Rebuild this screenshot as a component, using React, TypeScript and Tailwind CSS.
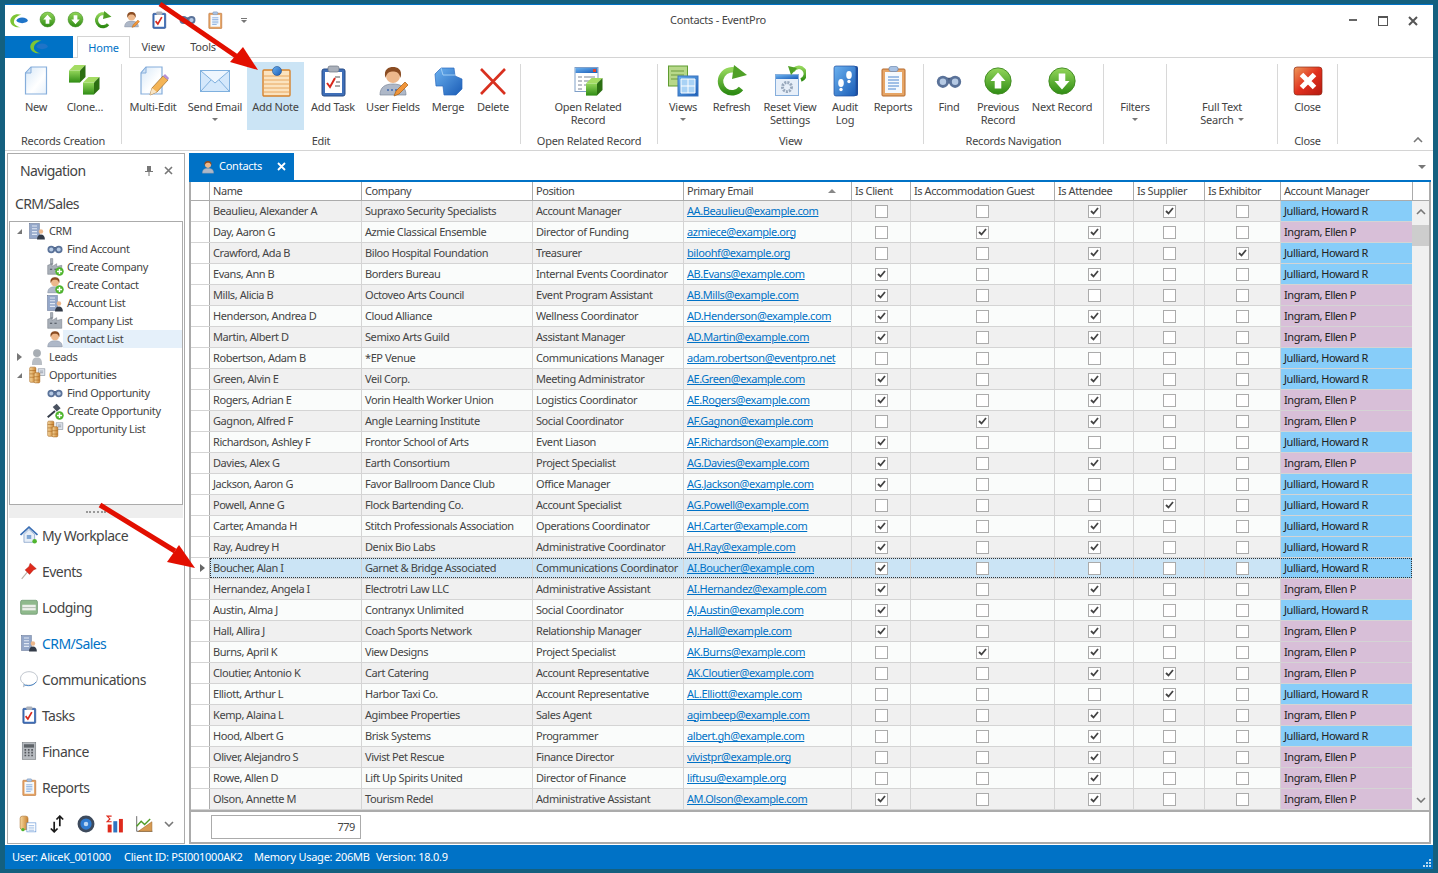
import type { ReactNode } from 'react';

const Ico = ({ s = 32, children }: { s?: number; children: ReactNode }) => (
  <svg width={s} height={s} viewBox="0 0 32 32" className="block shrink-0">
    {children}
  </svg>
);

const Gradients = () => (
  <svg className="block h-0 w-0">
    <defs>
      <linearGradient id="green" x1="0" y1="0" x2="0" y2="1">
        <stop offset="0" stopColor="#93d65a" />
        <stop offset="1" stopColor="#2f8c14" />
      </linearGradient>
      <linearGradient id="blue" x1="0" y1="0" x2="1" y2="1">
        <stop offset="0" stopColor="#6cb2f0" />
        <stop offset="1" stopColor="#1a5cb6" />
      </linearGradient>
      <linearGradient id="page" x1="0" y1="0" x2="1" y2="1">
        <stop offset="0" stopColor="#d7e8f8" />
        <stop offset="0.6" stopColor="#ffffff" />
        <stop offset="1" stopColor="#e6f0fa" />
      </linearGradient>
      <linearGradient id="red" x1="0" y1="0" x2="1" y2="1">
        <stop offset="0" stopColor="#ee9a5a" />
        <stop offset="0.5" stopColor="#e0301e" />
        <stop offset="1" stopColor="#b51a10" />
      </linearGradient>
      <linearGradient id="coin" x1="0" y1="0" x2="1" y2="0">
        <stop offset="0" stopColor="#f7d9a0" />
        <stop offset="1" stopColor="#c9812f" />
      </linearGradient>
    </defs>
  </svg>
);

const Cube = ({ x, y }: { x: number; y: number }) => (
  <g transform={`translate(${x} ${y}) scale(1.1)`}>
    <polygon points="0,5 5,0 15,0 10,5" fill="#a4dc63" />
    <polygon points="0,5 10,5 10,16 0,16" fill="url(#green)" />
    <polygon points="10,5 15,0 15,11 10,16" fill="#2c6f12" />
  </g>
);

const Pencil = () => (
  <g>
    <path d="M13 30l2-7 11-12 5 4-11 12z" fill="#f4b456" stroke="#9a6a2a" strokeWidth=".7" />
    <path d="M26 11l2-2 4 4-1 2z" fill="#b48fd6" />
    <path d="M13 30l2-7 5 4z" fill="#f8e4c4" />
  </g>
);

const Person = () => (
  <g>
    <path d="M3 30c0-8 5-11 13-11s13 3 13 11z" fill="#aeb8c8" stroke="#7c8698" strokeWidth=".7" />
    <circle cx="16" cy="11" r="7" fill="#edb88c" />
    <path d="M8.500 13C6 4 12 2 16 2s10 2 7.500 11C22 7 19 6.500 16 6.500S10 7 8.500 13z" fill="#8a4c22" />
  </g>
);

const NewIcon = () => (
  <Ico>
    <path d="M11 2h15.500v27h-21V8z" fill="url(#page)" stroke="#86aedb" strokeWidth="1.200" />
    <path d="M11 2v6H5.500z" fill="#cfe2f6" stroke="#86aedb" />
  </Ico>
);
const CloneIcon = () => (
  <Ico>
    <Cube x={0} y={0} />
    <Cube x={14} y={12} />
  </Ico>
);
const MultiEditIcon = () => (
  <Ico>
    <path d="M9 2h16v27H4V8z" fill="url(#page)" stroke="#86aedb" strokeWidth="1.200" />
    <path d="M9 2v6H4z" fill="#cfe2f6" stroke="#86aedb" />
    <Pencil />
  </Ico>
);
const MailIcon = () => (
  <Ico>
    <rect x="1.500" y="5.500" width="29" height="21" fill="#d4e8fb" stroke="#7fb0de" />
    <path d="M2 6l14 12L30 6" fill="#eef6fe" stroke="#7fb0de" />
    <path d="M2 26l10-11M30 26L20 15" fill="none" stroke="#7fb0de" />
  </Ico>
);
const NoteIcon = () => (
  <Ico>
    <rect x="3" y="5" width="27" height="26" rx="1" fill="#fbe3bf" stroke="#d6822b" strokeWidth="1.400" />
    <path d="M4 11h25M4 15h25M4 19h25M4 23h25M4 27h25" stroke="#e8a860" />
    <circle cx="17" cy="6" r="4.500" fill="url(#blue)" stroke="#1d4f8f" strokeWidth=".6" />
  </Ico>
);
const TaskIcon = () => (
  <Ico>
    <rect x="5" y="4" width="23" height="27" rx="2" fill="#3f6fb8" stroke="#274a85" />
    <rect x="8" y="7" width="17" height="21" fill="#ffffff" />
    <rect x="11" y="1" width="11" height="6" rx="2" fill="#aab0ba" stroke="#6f7682" strokeWidth=".7" />
    <path d="M10 18l3 4 5-9" fill="none" stroke="#d8281c" strokeWidth="2" />
    <path d="M18 12h5M19 17h4M18 21h5" stroke="#555" />
  </Ico>
);
const UserFieldsIcon = () => (
  <Ico>
    <Person />
    <circle cx="11" cy="25" r="1" fill="#3e68b0" />
    <circle cx="15" cy="25" r="1" fill="#3e68b0" />
    <circle cx="19" cy="25" r="1" fill="#3e68b0" />
    <path d="M17 31l2-5 9-9 3 3-9 9z" fill="#f0953a" stroke="#a65f12" strokeWidth=".7" />
  </Ico>
);
const MergeIcon = () => (
  <Ico>
    <path d="M3 9l6-6h13l1 8 7 3v10l-6 6H12l-1-9H4z" fill="url(#blue)" stroke="#2a69bd" strokeWidth=".7" />
    <path d="M9 3l2 7h12" fill="none" stroke="#9fcdf5" />
  </Ico>
);
const DeleteIcon = () => (
  <Ico>
    <path d="M4 4l24 25M28 4L4 29" stroke="#d8301f" strokeWidth="2.600" />
  </Ico>
);
const OpenRelatedIcon = () => (
  <Ico>
    <rect x="3" y="2.500" width="23" height="24" fill="#ffffff" stroke="#7f9fc8" />
    <rect x="3.500" y="3" width="22" height="5" fill="url(#blue)" />
    <rect x="21" y="4" width="3" height="3" fill="#e0452e" />
    <path d="M6 12h4M12 12h11M6 16h4M12 16h11M6 20h4M12 20h7M6 24h4" stroke="#7a8494" />
    <g transform="translate(-1 -1)">
      <Cube x={15} y={14} />
    </g>
  </Ico>
);
const ViewsIcon = () => (
  <Ico>
    <rect x="1.500" y="1" width="19" height="20" fill="#b7d88a" stroke="#5f9c31" />
    <path d="M4 6h13M4 10h13M4 14h8" stroke="#6d9a3e" />
    <rect x="11" y="11" width="20" height="20" fill="url(#blue)" stroke="#3a74c0" />
    <path d="M14 14h14v14H14zM14 21h14M21 14v14" fill="#a9d2f5" stroke="#ffffff" />
  </Ico>
);
const RefreshInner = () => (
  <>
    <path d="M25 23.500A11.500 11.500 0 1 1 22 6.500" fill="none" stroke="url(#green)" strokeWidth="5.500" />
    <polygon points="18,0 31,10 16,14" fill="#4fa026" />
  </>
);
const RefreshIcon = () => (
  <Ico>
    <RefreshInner />
  </Ico>
);
const ResetIcon = () => (
  <Ico>
    <rect x="1.500" y="9.500" width="23" height="21" fill="#e7eff9" stroke="#86aedb" />
    <rect x="2" y="10" width="22" height="4" fill="url(#blue)" />
    <circle cx="13" cy="22" r="4.500" fill="none" stroke="#98a8bc" strokeWidth="3" strokeDasharray="2 1" />
    <path d="M27 15a6.500 6.500 0 1 0-8-9" fill="none" stroke="url(#green)" strokeWidth="3.500" />
    <polygon points="14,1 23,3 17,10" fill="#4fa026" />
  </Ico>
);
const AuditIcon = () => (
  <Ico>
    <rect x="6" y="1" width="23" height="30" rx="2" fill="#1f4f9e" />
    <rect x="5" y="1" width="22" height="30" rx="2" fill="url(#blue)" stroke="#1f4f9e" strokeWidth=".7" />
    <ellipse cx="12" cy="18" rx="2.800" ry="4" fill="#ffffff" />
    <circle cx="12" cy="24.500" r="1.700" fill="#ffffff" />
    <ellipse cx="20" cy="10" rx="2.800" ry="4" fill="#ffffff" />
    <circle cx="20" cy="16.500" r="1.700" fill="#ffffff" />
  </Ico>
);
const ReportsIcon = ({ s = 32 }: { s?: number }) => (
  <Ico s={s}>
    <rect x="5" y="4" width="23" height="27" rx="1" fill="#e6a566" stroke="#b5692b" />
    <rect x="8" y="7" width="17" height="21" fill="#f5f9fd" />
    <rect x="12" y="1.500" width="9" height="5" rx="2" fill="#a9c2e3" stroke="#6b88b0" strokeWidth=".7" />
    <path d="M11 12h11M11 15h11M11 18h11M11 21h11M11 24h8" stroke="#4d86cf" />
  </Ico>
);
const BinocularsIcon = ({ s = 26 }: { s?: number }) => (
  <Ico s={s}>
    <rect x="12" y="12" width="8" height="7" fill="#47597a" />
    <circle cx="8.500" cy="17" r="7.500" fill="#5a7299" />
    <circle cx="23.500" cy="17" r="7.500" fill="#5a7299" />
    <circle cx="8.500" cy="17" r="4" fill="#b6cae4" />
    <circle cx="23.500" cy="17" r="4" fill="#b6cae4" />
  </Ico>
);
const ArrowCircle = ({ down = false, s = 30 }: { down?: boolean; s?: number }) => (
  <Ico s={s}>
    <circle cx="16" cy="16" r="14" fill="url(#green)" stroke="#3f8a1f" />
    <path d={down ? 'M16 25l8-9h-4.500V8h-7v8H8z' : 'M16 7l8 9h-4.500v8h-7v-8H8z'} fill="#ffffff" />
  </Ico>
);
const CloseIcon = () => (
  <Ico>
    <rect x="2" y="2" width="28" height="28" rx="3" fill="url(#red)" stroke="#8e2a16" strokeWidth=".7" />
    <path d="M9.500 9.500l13 13M22.500 9.500l-13 13" stroke="#ffffff" strokeWidth="5" />
  </Ico>
);
const Logo = ({ s = 20 }: { s?: number }) => (
  <Ico s={s}>
    <path d="M20 6C10 3 3 8 2 15c0 7 7 12 17 11-7-1-12-5-11-10 1-5 6-9 12-10z" fill="#7dc534" />
    <ellipse cx="21" cy="15" rx="9" ry="4.500" fill="#1f74c8" />
  </Ico>
);
const Building = () => (
  <g>
    <rect x="3" y="3" width="17" height="26" fill="#94a7c9" stroke="#5d6f92" />
    <path d="M7 7h9M7 12h9M7 17h9M7 22h9" stroke="#dfe7f3" strokeWidth="2" />
    <circle cx="23" cy="17" r="4" fill="#edb88c" />
    <path d="M16 31c0-6 3-9 7-9s7 3 7 9z" fill="#333b48" />
  </g>
);
const AccountIcon = ({ s = 18 }: { s?: number }) => (
  <Ico s={s}>
    <Building />
  </Ico>
);
const Plus = () => (
  <g>
    <circle cx="24" cy="24" r="7.500" fill="#4fb52d" />
    <path d="M24 19.500v9M19.500 24h9" stroke="#ffffff" strokeWidth="2.500" />
  </g>
);
const CompanyIcon = ({ add = false }: { add?: boolean }) => (
  <Ico s={18}>
    <path d="M8 1h4v10H8zM3 13l8-3v5l8-5v5l9-2v16H3z" fill="#a8afb8" stroke="#666e78" strokeWidth=".8" />
    <path d="M7 20h4M15 20h4" stroke="#444c56" strokeWidth="2" />
    {add && <Plus />}
  </Ico>
);
const ContactIcon = ({ add = false, s = 18 }: { add?: boolean; s?: number }) => (
  <Ico s={s}>
    <Person />
    {add && <Plus />}
  </Ico>
);
const LeadIcon = () => (
  <Ico s={18}>
    <circle cx="16" cy="9" r="7" fill="#a7adb3" />
    <path d="M7 30c0-10 3-13 9-13s9 3 9 13z" fill="#b9bec4" />
  </Ico>
);
const CoinsIcon = ({ s = 18 }: { s?: number }) => (
  <Ico s={s}>
    <rect x="18" y="5" width="12" height="12" fill="#dfe4ec" stroke="#7d8794" />
    <path d="M21 9h6M21 12h6" stroke="#6b7480" />
    <rect x="3" y="2" width="11" height="27" rx="2" fill="url(#coin)" stroke="#a4651f" />
    <rect x="11" y="12" width="10" height="18" rx="2" fill="url(#coin)" stroke="#a4651f" />
    <path d="M3 8h11M3 14h8M3 20h8M11 19h10M11 25h10" stroke="#a4651f" />
  </Ico>
);
const GavelIcon = () => (
  <Ico s={18}>
    <path d="M3 27l13-11" stroke="#333b48" strokeWidth="3.500" />
    <path d="M12 9l7-6 7 8-7 6z" fill="#4a5260" />
    <Plus />
  </Ico>
);
const HouseIcon = () => (
  <Ico s={18}>
    <path d="M7 15v14h19V15L16 6z" fill="#e7eef7" stroke="#5d83b5" />
    <path d="M1 16L16 2l15 14" fill="none" stroke="#3b6fb4" strokeWidth="3" />
    <rect x="12" y="16" width="8" height="7" fill="#7fa6d4" />
    <circle cx="26" cy="27" r="4" fill="#4fb52d" />
  </Ico>
);
const PinIcon = () => (
  <Ico s={18}>
    <path d="M3 30l10-12" stroke="#b9b2a8" strokeWidth="2" />
    <path d="M18 2l11 10-5 2-7 8-8-8 7-6z" fill="#df2a1c" stroke="#a3170e" strokeWidth=".7" />
  </Ico>
);
const LodgingIcon = () => (
  <Ico s={18}>
    <rect x="1" y="4" width="30" height="25" rx="3" fill="#8fb98c" stroke="#53825a" />
    <rect x="4" y="12" width="24" height="10" fill="#ecf0ea" />
    <path d="M4 17h24" stroke="#8b9a8b" />
  </Ico>
);
const BubbleIcon = () => (
  <Ico s={18}>
    <path d="M16 3c8 0 15 5 15 12s-7 12-15 12c-2 0-3 0-5-1l-5 4 1-6C3 22 1 19 1 15 1 8 8 3 16 3z" fill="#ffffff" stroke="#8e9aa8" />
    <path d="M7 26c6 3 16 3 22-5" fill="none" stroke="#2f74c0" strokeWidth="1.500" />
  </Ico>
);
const CalculatorIcon = () => (
  <Ico s={18}>
    <rect x="4" y="1" width="24" height="30" fill="#b7bbc0" stroke="#6e7378" />
    <rect x="7" y="4" width="18" height="6" fill="#5e6368" />
    <path d="M8 14h3M14 14h3M20 14h3M8 19h3M14 19h3M20 19h3M8 24h3M14 24h3M20 24h3" stroke="#54585c" strokeWidth="3" />
  </Ico>
);
const DocDbIcon = () => (
  <Ico s={18}>
    <rect x="2" y="2" width="14" height="24" rx="4" fill="url(#coin)" stroke="#a4651f" />
    <rect x="14" y="14" width="16" height="16" fill="#ffffff" stroke="#4d86cf" />
    <path d="M17 19h10M17 23h10M17 27h10" stroke="#4d86cf" />
    <circle cx="7" cy="26" r="3" fill="#4fb52d" />
  </Ico>
);
const SortIcon = () => (
  <Ico s={18}>
    <path d="M11 12v18M5 24l6 6 6-6M21 20V2M15 8l6-6 6 6" fill="none" stroke="#1a1a1a" strokeWidth="3" />
  </Ico>
);
const GlobeIcon = () => (
  <Ico s={18}>
    <circle cx="16" cy="16" r="15" fill="#3d4a5c" />
    <circle cx="16" cy="16" r="10" fill="#2f7bd0" />
    <circle cx="16" cy="16" r="4" fill="#bcd7f2" />
  </Ico>
);
const SigmaIcon = () => (
  <Ico s={18}>
    <rect x="3" y="17" width="7" height="14" fill="#df2a1c" />
    <rect x="13" y="11" width="7" height="20" fill="#2f74c0" />
    <rect x="23" y="7" width="7" height="24" fill="#df2a1c" />
    <path d="M10 2H2l5 5-5 5h8" fill="none" stroke="#df2a1c" strokeWidth="2" />
  </Ico>
);
const TrendIcon = () => (
  <Ico s={18}>
    <path d="M3 2v27h28" fill="none" stroke="#555" strokeWidth="1.500" />
    <path d="M30 12v17H6z" fill="#d79a52" stroke="#9d6526" />
    <path d="M3 20l8-9 6 6 10-10" fill="none" stroke="#4f9c26" strokeWidth="2.500" />
  </Ico>
);
const TaskInner = () => (
  <>
    <rect x="5" y="4" width="23" height="27" rx="2" fill="#3f6fb8" stroke="#274a85" />
    <rect x="8" y="7" width="17" height="21" fill="#ffffff" />
    <rect x="11" y="1" width="11" height="6" rx="2" fill="#aab0ba" />
    <path d="M10 18l4 5 7-12" fill="none" stroke="#d8281c" strokeWidth="3" />
  </>
);
const UserFieldsInner = () => (
  <>
    <Person />
    <path d="M17 31l2-5 9-9 3 3-9 9z" fill="#f0953a" stroke="#a65f12" strokeWidth=".7" />
  </>
);
const Caret = () => <span className="mt-[5px] block h-0 w-0 border-x-[3px] border-t-[3px] border-x-transparent border-t-[#777]" />;

type RibbonButton = { lines: string[]; w: string; icon?: ReactNode; caret?: boolean; inlineCaret?: boolean; active?: boolean };
type RibbonGroup = { caption: string; w: string; pl?: string; buttons: RibbonButton[] };

const groups: RibbonGroup[] = [
  {
    caption: 'Records Creation',
    w: 'w-[116px]',
    pl: 'pl-[8px]',
    buttons: [
      { lines: ['New'], w: 'w-[46px]', icon: <NewIcon /> },
      { lines: ['Clone…'], w: 'w-[52px]', icon: <CloneIcon /> },
    ],
  },
  {
    caption: 'Edit',
    w: 'w-[398px]',
    pl: 'pl-[1px]',
    buttons: [
      { lines: ['Multi-Edit'], w: 'w-[60px]', icon: <MultiEditIcon /> },
      { lines: ['Send Email'], w: 'w-[64px]', icon: <MailIcon />, caret: true },
      { lines: ['Add Note'], w: 'w-[57px]', icon: <NoteIcon />, active: true },
      { lines: ['Add Task'], w: 'w-[58px]', icon: <TaskIcon /> },
      { lines: ['User Fields'], w: 'w-[62px]', icon: <UserFieldsIcon /> },
      { lines: ['Merge'], w: 'w-[48px]', icon: <MergeIcon /> },
      { lines: ['Delete'], w: 'w-[42px]', icon: <DeleteIcon /> },
    ],
  },
  {
    caption: 'Open Related Record',
    w: 'w-[136px]',
    buttons: [{ lines: ['Open Related', 'Record'], w: 'w-[134px]', icon: <OpenRelatedIcon /> }],
  },
  {
    caption: 'View',
    w: 'w-[265px]',
    buttons: [
      { lines: ['Views'], w: 'w-[50px]', icon: <ViewsIcon />, caret: true },
      { lines: ['Refresh'], w: 'w-[47px]', icon: <RefreshIcon /> },
      { lines: ['Reset View', 'Settings'], w: 'w-[70px]', icon: <ResetIcon /> },
      { lines: ['Audit', 'Log'], w: 'w-[40px]', icon: <AuditIcon /> },
      { lines: ['Reports'], w: 'w-[56px]', icon: <ReportsIcon /> },
    ],
  },
  {
    caption: 'Records Navigation',
    w: 'w-[179px]',
    buttons: [
      { lines: ['Find'], w: 'w-[50px]', icon: <BinocularsIcon /> },
      { lines: ['Previous', 'Record'], w: 'w-[48px]', icon: <ArrowCircle /> },
      { lines: ['Next Record'], w: 'w-[80px]', icon: <ArrowCircle down /> },
    ],
  },
  { caption: '', w: 'w-[62px]', buttons: [{ lines: ['Filters'], w: 'w-[62px]', caret: true }] },
  { caption: '', w: 'w-[110px]', buttons: [{ lines: ['Full Text', 'Search'], w: 'w-[110px]', inlineCaret: true }] },
  { caption: 'Close', w: 'w-[59px]', buttons: [{ lines: ['Close'], w: 'w-[59px]', icon: <CloseIcon /> }] },
];

const qat: ReactNode[] = [
  <Logo />,
  <ArrowCircle s={17} />,
  <ArrowCircle down s={17} />,
  <Ico s={18}><RefreshInner /></Ico>,
  <Ico s={17}><UserFieldsInner /></Ico>,
  <Ico s={18}><TaskInner /></Ico>,
  <BinocularsIcon s={17} />,
  <ReportsIcon s={18} />,
];

const tree: { label: string; level: 0 | 1; icon: ReactNode; exp?: 'open' | 'closed'; selected?: boolean }[] = [
  { label: 'CRM', level: 0, icon: <AccountIcon />, exp: 'open' },
  { label: 'Find Account', level: 1, icon: <BinocularsIcon s={16} /> },
  { label: 'Create Company', level: 1, icon: <CompanyIcon add /> },
  { label: 'Create Contact', level: 1, icon: <ContactIcon add /> },
  { label: 'Account List', level: 1, icon: <AccountIcon /> },
  { label: 'Company List', level: 1, icon: <CompanyIcon /> },
  { label: 'Contact List', level: 1, icon: <ContactIcon />, selected: true },
  { label: 'Leads', level: 0, icon: <LeadIcon />, exp: 'closed' },
  { label: 'Opportunities', level: 0, icon: <CoinsIcon />, exp: 'open' },
  { label: 'Find Opportunity', level: 1, icon: <BinocularsIcon s={16} /> },
  { label: 'Create Opportunity', level: 1, icon: <GavelIcon /> },
  { label: 'Opportunity List', level: 1, icon: <CoinsIcon /> },
];

const navItems: { label: string; icon: ReactNode; current?: boolean }[] = [
  { label: 'My Workplace', icon: <HouseIcon /> },
  { label: 'Events', icon: <PinIcon /> },
  { label: 'Lodging', icon: <LodgingIcon /> },
  { label: 'CRM/Sales', icon: <AccountIcon />, current: true },
  { label: 'Communications', icon: <BubbleIcon /> },
  { label: 'Tasks', icon: <Ico s={18}><TaskInner /></Ico> },
  { label: 'Finance', icon: <CalculatorIcon /> },
  { label: 'Reports', icon: <ReportsIcon s={18} /> },
];

const columns = [
  { label: 'Name', w: 'w-[152px]' },
  { label: 'Company', w: 'w-[171px]' },
  { label: 'Position', w: 'w-[151px]' },
  { label: 'Primary Email', w: 'w-[168px]', sorted: true },
  { label: 'Is Client', w: 'w-[59px]' },
  { label: 'Is Accommodation Guest', w: 'w-[144px]' },
  { label: 'Is Attendee', w: 'w-[79px]' },
  { label: 'Is Supplier', w: 'w-[71px]' },
  { label: 'Is Exhibitor', w: 'w-[76px]' },
  { label: 'Account Manager', w: 'w-[132px]' },
];
const flagWidths = ['w-[59px]', 'w-[144px]', 'w-[79px]', 'w-[71px]', 'w-[76px]'];

const rows: [string, string, string, string, string, 'J' | 'I'][] = [
  ['Beaulieu, Alexander A', 'Supraxo Security Specialists', 'Account Manager', 'AA.Beaulieu@example.com', '00110', 'J'],
  ['Day, Aaron G', 'Azmie Classical Ensemble', 'Director of Funding', 'azmiece@example.org', '01100', 'I'],
  ['Crawford, Ada B', 'Biloo Hospital Foundation', 'Treasurer', 'biloohf@example.org', '00101', 'J'],
  ['Evans, Ann B', 'Borders Bureau', 'Internal Events Coordinator', 'AB.Evans@example.com', '10100', 'J'],
  ['Mills, Alicia B', 'Octoveo Arts Council', 'Event Program Assistant', 'AB.Mills@example.com', '10000', 'I'],
  ['Henderson, Andrea D', 'Cloud Alliance', 'Wellness Coordinator', 'AD.Henderson@example.com', '10100', 'I'],
  ['Martin, Albert D', 'Semixo Arts Guild', 'Assistant Manager', 'AD.Martin@example.com', '10100', 'I'],
  ['Robertson, Adam B', '*EP Venue', 'Communications Manager', 'adam.robertson@eventpro.net', '00000', 'J'],
  ['Green, Alvin E', 'Veil Corp.', 'Meeting Administrator', 'AE.Green@example.com', '10100', 'J'],
  ['Rogers, Adrian E', 'Vorin Health Worker Union', 'Logistics Coordinator', 'AE.Rogers@example.com', '10100', 'I'],
  ['Gagnon, Alfred F', 'Angle Learning Institute', 'Social Coordinator', 'AF.Gagnon@example.com', '01100', 'I'],
  ['Richardson, Ashley F', 'Frontor School of Arts', 'Event Liason', 'AF.Richardson@example.com', '10000', 'J'],
  ['Davies, Alex G', 'Earth Consortium', 'Project Specialist', 'AG.Davies@example.com', '10100', 'I'],
  ['Jackson, Aaron G', 'Favor Ballroom Dance Club', 'Office Manager', 'AG.Jackson@example.com', '10000', 'J'],
  ['Powell, Anne G', 'Flock Bartending Co.', 'Account Specialist', 'AG.Powell@example.com', '00010', 'J'],
  ['Carter, Amanda H', 'Stitch Professionals Association', 'Operations Coordinator', 'AH.Carter@example.com', '10100', 'J'],
  ['Ray, Audrey H', 'Denix Bio Labs', 'Administrative Coordinator', 'AH.Ray@example.com', '10100', 'J'],
  ['Boucher, Alan I', 'Garnet & Bridge Associated', 'Communications Coordinator', 'AI.Boucher@example.com', '10000', 'J'],
  ['Hernandez, Angela I', 'Electrotri Law LLC', 'Administrative Assistant', 'AI.Hernandez@example.com', '10100', 'I'],
  ['Austin, Alma J', 'Contranyx Unlimited', 'Social Coordinator', 'AJ.Austin@example.com', '10100', 'J'],
  ['Hall, Allira J', 'Coach Sports Network', 'Relationship Manager', 'AJ.Hall@example.com', '10100', 'I'],
  ['Burns, April K', 'View Designs', 'Project Specialist', 'AK.Burns@example.com', '01100', 'I'],
  ['Cloutier, Antonio K', 'Cart Catering', 'Account Representative', 'AK.Cloutier@example.com', '00110', 'I'],
  ['Elliott, Arthur L', 'Harbor Taxi Co.', 'Account Representative', 'AL.Elliott@example.com', '00010', 'J'],
  ['Kemp, Alaina L', 'Agimbee Properties', 'Sales Agent', 'agimbeep@example.com', '00100', 'I'],
  ['Hood, Albert G', 'Brisk Systems', 'Programmer', 'albert.gh@example.com', '00100', 'J'],
  ['Oliver, Alejandro S', 'Vivist Pet Rescue', 'Finance Director', 'vivistpr@example.org', '00100', 'I'],
  ['Rowe, Allen D', 'Lift Up Spirits United', 'Director of Finance', 'liftusu@example.org', '00100', 'I'],
  ['Olson, Annette M', 'Tourism Redel', 'Administrative Assistant', 'AM.Olson@example.com', '10100', 'I'],
];

const Check = ({ on }: { on: boolean }) => (
  <span className="flex h-[13px] w-[13px] items-center justify-center border border-[#ababab] bg-white">
    {on && (
      <svg width="9" height="8" viewBox="0 0 9 8" className="block">
        <path d="M1 4l2.500 2.500L8 1" fill="none" stroke="#444" strokeWidth="1.800" />
      </svg>
    )}
  </span>
);

function Ribbon() {
  return (
    <div className="flex h-[93px] border-b border-[#d4d4d4]">
      {groups.map((g, i) => (
        <div key={i} className="flex">
          <div className={`${g.w} flex h-[92px] flex-col`}>
            <div className={`flex h-[72px] ${g.pl ?? ''} pt-[4px]`}>
              {g.buttons.map((b) => (
                <div key={b.lines[0]} className={`${b.w} ${b.active ? 'bg-[#cbe4f5]' : ''} flex h-[68px] flex-col items-center pt-[3px]`}>
                  <div className="flex h-[32px] items-center justify-center">{b.icon}</div>
                  <div className="mt-[3px] flex flex-col items-center text-center leading-[13px]">
                    {b.lines.map((l, j) => (
                      <span key={l} className="flex items-center gap-[4px] whitespace-nowrap">
                        {l}
                        {b.inlineCaret && j === 1 && <span className="block h-0 w-0 border-x-[3px] border-t-[3px] border-x-transparent border-t-[#777]" />}
                      </span>
                    ))}
                    {b.caret && <Caret />}
                  </div>
                </div>
              ))}
            </div>
            <div className="h-[20px] text-center leading-[22px]">{g.caption}</div>
          </div>
          <div className="mt-[6px] h-[80px] w-px bg-[#d8d8d8]" />
        </div>
      ))}
      <div className="flex flex-1 items-end justify-end pb-[7px] pr-[10px]">
        <svg width="10" height="6" viewBox="0 0 10 6" className="block">
          <path d="M1 5l4-4 4 4" fill="none" stroke="#777" strokeWidth="1.600" />
        </svg>
      </div>
    </div>
  );
}

function NavPanel() {
  return (
    <aside className="flex h-[691px] w-[178px] flex-col border border-[#ababab] bg-white text-[#444] tracking-[-0.35px]">
      <div className="flex h-[33px] items-center pl-[12px] pr-[11px]">
        <span className="flex-1 text-[14px] tracking-[-0.6px]">Navigation</span>
        <svg width="8" height="10" viewBox="0 0 8 10" className="mr-[11px] block">
          <path d="M2 0h4v5h2v1H4.500v4h-1V6H0V5h2z" fill="#777" />
        </svg>
        <svg width="9" height="9" viewBox="0 0 9 9" className="block">
          <path d="M1 1l7 7M8 1L1 8" stroke="#777" strokeWidth="1.600" />
        </svg>
      </div>
      <div className="flex h-[34px] items-center pb-[2px] pl-[7px] text-[14px] tracking-[-0.6px]">CRM/Sales</div>
      <div className="mx-[1px] h-[284px] border border-[#ababab]">
        {tree.map((t) => (
          <div key={t.label} className="flex h-[18px] items-center">
            {t.level === 0 ? (
              <>
                <span className="flex w-[19px] justify-center">
                  {t.exp === 'open' ? (
                    <svg width="7" height="7" viewBox="0 0 7 7" className="block"><path d="M6 1v5H1z" fill="#777" /></svg>
                  ) : (
                    <svg width="5" height="8" viewBox="0 0 5 8" className="block"><path d="M0 0l5 4-5 4z" fill="#777" /></svg>
                  )}
                </span>
                <span className="flex w-[16px] justify-center">{t.icon}</span>
                <span className="pl-[4px]">{t.label}</span>
              </>
            ) : (
              <>
                <span className="w-[37px]" />
                <span className="flex w-[16px] justify-center">{t.icon}</span>
                <span className={`flex h-full flex-1 items-center pl-[4px] ${t.selected ? 'bg-[#e5f0fa]' : ''}`}>{t.label}</span>
              </>
            )}
          </div>
        ))}
      </div>
      <div className="mx-[1px] flex h-[13px] items-center justify-center bg-[#eeeeee]">
        <span className="w-[20px] border-t-2 border-dotted border-[#999]" />
      </div>
      {navItems.map((n) => (
        <div key={n.label} className="flex h-[36px] items-center gap-[4px] pb-[2px] pl-[12px]">
          <span className="flex w-[18px] justify-center">{n.icon}</span>
          <span className={`text-[14px] tracking-[-0.55px] ${n.current ? 'text-[#0072c6]' : ''}`}>{n.label}</span>
        </div>
      ))}
      <div className="flex h-[36px] items-center justify-between pl-[11px] pr-[10px]">
        <DocDbIcon />
        <SortIcon />
        <GlobeIcon />
        <SigmaIcon />
        <TrendIcon />
        <svg width="10" height="6" viewBox="0 0 10 6" className="block">
          <path d="M1 1l4 4 4-4" fill="none" stroke="#777" strokeWidth="1.600" />
        </svg>
      </div>
    </aside>
  );
}

function ContactsGrid() {
  return (
    <section className="flex h-[691px] w-[1242px] flex-col bg-white text-[#444]">
      <div className="flex h-[27px] items-center">
        <div className="flex h-[27px] w-[105px] items-center bg-[#0072c6] pl-[12px] text-white">
          <ContactIcon s={14} />
          <span className="ml-[4px] flex-1">Contacts</span>
          <svg width="9" height="9" viewBox="0 0 9 9" className="mr-[8px] block">
            <path d="M1 1l7 7M8 1L1 8" stroke="#ffffff" strokeWidth="1.800" />
          </svg>
        </div>
        <div className="flex flex-1 justify-end pr-[5px]">
          <span className="block h-0 w-0 border-x-[4px] border-t-[4px] border-x-transparent border-t-[#777]" />
        </div>
      </div>
      <div className="h-[2px] bg-[#0072c6]" />
      <div className="flex flex-1 flex-col border-x-2 border-b-2 border-[#ababab] tracking-[-0.42px]">
        <div className="flex h-[19px] border-b border-[#ababab]">
          <div className="w-[19px] border-r border-[#ababab]" />
          {columns.map((c) => (
            <div key={c.label} className={`${c.w} flex items-center border-r border-[#ababab] pl-[3px] whitespace-nowrap`}>
              <span className="flex-1">{c.label}</span>
              {c.sorted && <span className="mr-[15px] block h-0 w-0 border-x-[4px] border-b-[4px] border-x-transparent border-b-[#888]" />}
            </div>
          ))}
        </div>
        <div className="flex h-[609px]">
          <div className="flex-1 overflow-hidden">
            {rows.map((r, i) => {
              const selected = r[0] === 'Boucher, Alan I';
              return (
                <div
                  key={r[0]}
                  className={`relative flex h-[21px] border-b border-[#d4d4d4] ${i % 2 === 0 ? 'bg-[#f0f0f0]' : 'bg-[#fafcfb]'}`}
                >
                  <div className="flex w-[19px] items-center justify-end border-r border-[#ababab] bg-white pr-[4px]">
                    {selected && <span className="block h-0 w-0 border-y-[4px] border-l-[5px] border-y-transparent border-l-[#666]" />}
                  </div>
                  <div className={`flex ${selected ? 'bg-[#cbe4f5]' : ''}`}>
                    <div className="flex w-[152px] items-center overflow-hidden border-r border-[#d4d4d4] pl-[3px] whitespace-nowrap">{r[0]}</div>
                    <div className="flex w-[171px] items-center overflow-hidden border-r border-[#d4d4d4] pl-[3px] whitespace-nowrap">{r[1]}</div>
                    <div className="flex w-[151px] items-center overflow-hidden border-r border-[#d4d4d4] pl-[3px] whitespace-nowrap">{r[2]}</div>
                    <div className="flex w-[168px] items-center overflow-hidden border-r border-[#d4d4d4] pl-[3px] whitespace-nowrap text-[#0072c6] underline">{r[3]}</div>
                    {flagWidths.map((w, k) => (
                      <div key={w} className={`${w} flex items-center justify-center border-r border-[#d4d4d4]`}>
                        <Check on={r[4][k] === '1'} />
                      </div>
                    ))}
                  </div>
                  <div className={`flex w-[131px] items-center pl-[3px] text-[#222] ${r[5] === 'J' ? 'bg-[#87cdf9]' : 'bg-[#d8bfd8]'}`}>
                    {r[5] === 'J' ? 'Julliard, Howard R' : 'Ingram, Ellen P'}
                  </div>
                  {selected && <span className="absolute inset-y-0 left-[19px] right-0 border border-dotted border-[#333]" />}
                </div>
              );
            })}
          </div>
          <div className="flex w-[17px] flex-col items-center bg-[#f0f0f0] pt-[8px]">
            <svg width="10" height="6" viewBox="0 0 10 6" className="block">
              <path d="M1 5l4-4 4 4" fill="none" stroke="#777" strokeWidth="1.600" />
            </svg>
            <div className="mt-[10px] h-[21px] w-full bg-[#cdcdcd]" />
            <div className="flex-1" />
            <svg width="10" height="6" viewBox="0 0 10 6" className="mb-[7px] block">
              <path d="M1 1l4 4 4-4" fill="none" stroke="#777" strokeWidth="1.600" />
            </svg>
          </div>
        </div>
        <div className="flex flex-1 items-center border-t-2 border-[#ababab] pl-[20px]">
          <div className="flex h-[24px] w-[150px] items-center justify-end border border-[#ababab] pr-[5px]">779</div>
        </div>
      </div>
    </section>
  );
}

export default function App() {
  return (
    <div className="relative h-[873px] w-[1438px] overflow-hidden bg-[#14607f] px-[5px] pb-[4px] pt-[4px] font-['Noto_Sans',sans-serif] text-[11px] tracking-[-0.25px] text-[#444]">
      <Gradients />
      <div className="flex h-[865px] flex-col border-t border-[#0072c6] bg-white">
        <div className="flex h-[31px] items-center">
          <div className="flex">
            {qat.map((icon, i) => (
              <span key={i} className="flex w-[28px] justify-center">{icon}</span>
            ))}
          </div>
          <span className="flex w-[30px] flex-col items-center gap-[1px]">
            <span className="h-px w-[6px] bg-[#777]" />
            <span className="block h-0 w-0 border-x-[3px] border-t-[3px] border-x-transparent border-t-[#777]" />
          </span>
          <div className="w-[918px] text-center">Contacts - EventPro</div>
          <div className="flex-1" />
          <div className="flex pr-[5px]">
            <span className="flex w-[30px] justify-center">
              <span className="mt-[3px] h-[2px] w-[8px] bg-[#666]" />
            </span>
            <span className="flex w-[30px] justify-center">
              <span className="h-[10px] w-[10px] border border-t-2 border-[#555]" />
            </span>
            <span className="flex w-[30px] justify-center">
              <svg width="10" height="10" viewBox="0 0 10 10" className="block">
                <path d="M1 1l8 8M9 1L1 9" stroke="#555" strokeWidth="2" />
              </svg>
            </span>
          </div>
        </div>
        <div className="flex h-[22px] border-b border-[#d4d4d4]">
          <div className="flex h-[22px] w-[68px] items-center justify-center bg-[#0072c6]">
            <Logo />
          </div>
          <div className="ml-[4px] flex h-[22px] w-[53px] items-center justify-center border-x border-t border-[#d4d4d4] bg-white pt-[2px] text-[#0072c6]">Home</div>
          <div className="flex w-[46px] items-center justify-center pt-[2px]">View</div>
          <div className="flex w-[54px] items-center justify-center pt-[2px]">Tools</div>
        </div>
        <Ribbon />
        <div className="flex flex-1 gap-[4px] pl-[2px] pt-[2px]">
          <NavPanel />
          <ContactsGrid />
        </div>
        <div className="flex h-[24px] items-center bg-[#0072c6] pl-[7px] text-white">
          <span className="w-[112px]">User: AliceK_001000</span>
          <span className="w-[130px]">Client ID: PSI001000AK2</span>
          <span className="w-[122px]">Memory Usage: 206MB</span>
          <span>Version: 18.0.9</span>
          <svg width="9" height="9" viewBox="0 0 9 9" className="ml-auto mr-[1px] mt-[12px] block">
            <path d="M6 0h2v2H6zM3 3h2v2H3zM6 3h2v2H6zM0 6h2v2H0zM3 6h2v2H3zM6 6h2v2H6z" fill="#b8d8ef" />
          </svg>
        </div>
      </div>
      <svg width="1438" height="873" viewBox="0 0 1438 873" className="pointer-events-none absolute left-0 top-0">
        <path d="M160 4l76 52" stroke="#e20f00" strokeWidth="5" />
        <polygon points="258,70 230,62 243,47" fill="#e20f00" />
        <path d="M100 505l75 46" stroke="#e20f00" strokeWidth="5" />
        <polygon points="195,568 167,562 179,545" fill="#e20f00" />
      </svg>
    </div>
  );
}
